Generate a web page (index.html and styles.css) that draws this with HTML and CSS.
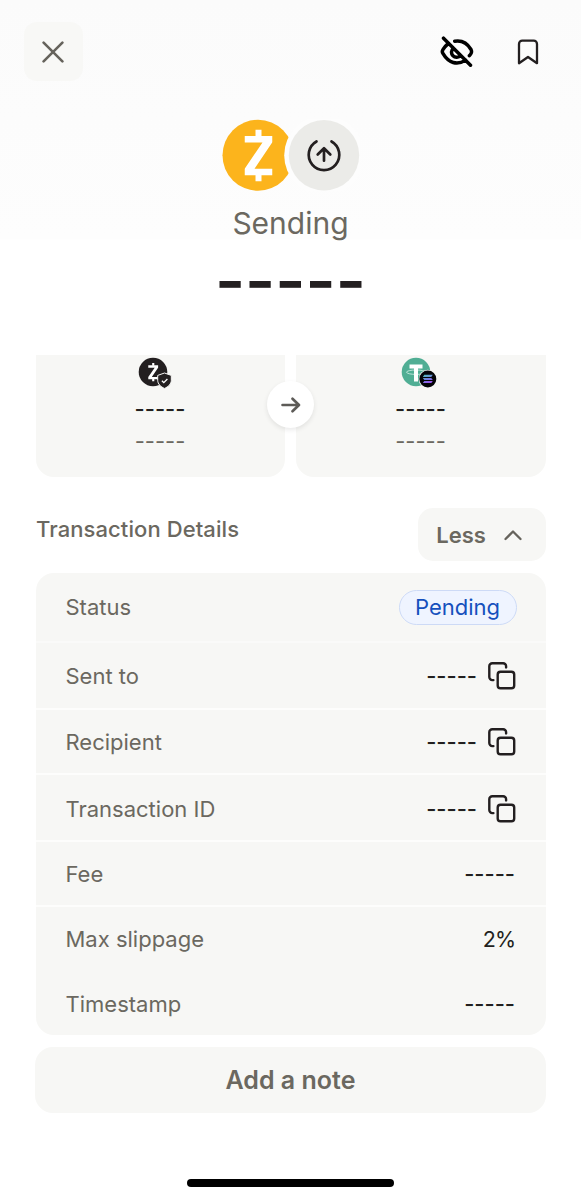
FILE: index.html
```html
<!DOCTYPE html>
<html lang="en">
<head>
<meta charset="utf-8">
<title>Transaction</title>
<link rel="stylesheet" href="styles.css">
</head>
<body>
<svg class="defs" aria-hidden="true">
  <symbol id="copy" viewBox="0 0 28 28"><g fill="none" stroke="#231f20" stroke-width="2.4" stroke-linecap="round"><rect x="9.700" y="9.700" width="16.500" height="16.500" rx="2.800"/><path d="M5.400 18.100H4.300a3 3 0 0 1-3-3V4.300a3 3 0 0 1 3-3h10.800a3 3 0 0 1 3 3v1.100"/></g></symbol>
  <symbol id="zec" viewBox="0 0 28 52"><path d="M14 0v8M14 44v8" fill="none" stroke="#fff" stroke-width="6"/><path d="M0 6.400h28v6.200L10 39.200h18v6.600H0v-6.200L18 13H0z" fill="#fff"/></symbol>
</svg>
<main class="screen">
  <header class="topbar">
    <button class="close" aria-label="Close"><svg width="22" height="22" viewBox="0 0 22 22"><path d="M1.600 1.600l18.800 18.800M20.400 1.600L1.600 20.400"/></svg></button>
    <div class="actions">
      <svg width="34" height="32" viewBox="0 0 34 32" fill="none" stroke="#000" stroke-width="3.500" stroke-linecap="round"><path d="M3.500 2.200l27 27M14.700 5.300c7.200-1.200 12.900 2.400 16.300 8.200.7 1.300.8 2.500 0 4-.4.700-1 1.500-1.600 2.200M7.300 8.500C5.300 10 3.900 12 2.900 13.700c-.8 1.200-.8 2.400 0 3.700 5.600 9.600 14.200 12.300 22.800 6.700M13.500 12.300a5 5 0 1 0 7 7"/></svg>
      <svg width="22" height="26" viewBox="0 0 22 26" fill="none" stroke="#231f20" stroke-width="2.300" stroke-linejoin="round"><path d="M2 24.200V5a3.300 3.300 0 0 1 3.300-3.300h11.400A3.300 3.300 0 0 1 20 5v19.200l-9-6.200z"/></svg>
    </div>
  </header>

  <section class="summary">
    <svg width="138" height="72" viewBox="0 0 138 72">
      <circle cx="36" cy="36.300" r="35.500" fill="#fcb41c"/>
      <circle cx="102" cy="36.300" r="39.800" fill="#fdfdfd"/>
      <circle cx="102" cy="36.300" r="35.200" fill="#ebebe8"/>
      <use href="#zec" x="22.500" y="10.500" width="28" height="52"/>
      <g fill="none" stroke="#231f20" stroke-width="2.700" stroke-linecap="round" stroke-linejoin="round"><path d="M94.500 22.500a15.300 15.300 0 1 0 15 0M102 41.700V30M95.700 35.500l6.300-6.300 6.300 6.300"/></g>
    </svg>
    <h1 class="title">Sending</h1>
    <div class="amount">-----</div>
  </section>

  <section class="swap">
    <div class="asset from">
      <svg width="34" height="32" viewBox="0 0 34 32"><circle cx="15" cy="15" r="14.300" fill="#231f20"/><use href="#zec" x="10" y="6" width="10.500" height="18.500"/><path d="M26.500 16l6.800 2.400v5c0 3.500-3.200 6.500-6.800 8-3.600-1.500-6.800-4.500-6.800-8v-5z" fill="#231f20" stroke="#f7f7f5" stroke-width="1"/><path d="M23.900 23.700l1.900 1.900 3.600-3.600" fill="none" stroke="#fff" stroke-width="1.300"/></svg>
      <span class="value">-----</span>
      <span class="sub">-----</span>
    </div>
    <div class="asset to">
      <svg width="36" height="32" viewBox="0 0 36 32"><defs><linearGradient id="sol" x1="0" y1="0" x2="0.500" y2="1"><stop offset="0" stop-color="#51c5b6"/><stop offset=".55" stop-color="#6d83dc"/><stop offset="1" stop-color="#9b56ee"/></linearGradient></defs><circle cx="15" cy="15" r="14.300" fill="#50ae94"/><ellipse cx="15" cy="15.200" rx="9.500" ry="2.200" fill="none" stroke="#d5f0e8" stroke-width=".8"/><path d="M8.500 9.500h13M15 9v15.500" stroke="#fff" stroke-width="4" fill="none"/><circle cx="26.800" cy="22" r="9.200" fill="#f7f7f5"/><circle cx="26.800" cy="22" r="8.500" fill="#050509"/><path d="M23.300 17.800h8.500l-1.500 2.100h-8.500zM21.800 20.900h8.500l1.500 2.100h-8.500zM23.300 24h8.500l-1.500 2.100h-8.500z" fill="url(#sol)"/></svg>
      <span class="value">-----</span>
      <span class="sub">-----</span>
    </div>
    <div class="arrow"><svg width="20" height="16" viewBox="0 0 20 16"><path d="M1.500 8h16M11.500 1.700L18 8l-6.500 6.300"/></svg></div>
  </section>

  <section class="details-head">
    <h2>Transaction Details</h2>
    <button class="less">Less<svg width="18" height="12" viewBox="0 0 18 12"><path d="M1.500 10L9 2.500l7.500 7.500"/></svg></button>
  </section>

  <section class="details">
    <div class="row status"><span>Status</span><span class="pill">Pending</span></div>
    <div class="row sent"><span>Sent to</span><span class="data">-----<svg width="28" height="28"><use href="#copy"/></svg></span></div>
    <div class="row"><span>Recipient</span><span class="data">-----<svg width="28" height="28"><use href="#copy"/></svg></span></div>
    <div class="row id"><span>Transaction ID</span><span class="data">-----<svg width="28" height="28"><use href="#copy"/></svg></span></div>
    <div class="row"><span>Fee</span><span class="data">-----</span></div>
    <div class="row plain"><span>Max slippage</span><span class="data percent">2%</span></div>
    <div class="row plain last"><span>Timestamp</span><span class="data">-----</span></div>
  </section>

  <button class="note">Add a note</button>
  <div class="home"></div>
</main>
</body>
</html>
```
FILE: styles.css
```css
* { box-sizing: border-box; }
body { margin: 0; background: #fff; font-family: Inter, "Liberation Sans", sans-serif; font-feature-settings: "calt" 0; color: #231f20; }
button { border: 0; margin: 0; padding: 0; font: inherit; color: #6b6860; }
h1, h2 { margin: 0; }
svg { display: block; flex: none; }
.defs { display: none; }
.screen { width: 581px; height: 1199px; display: flex; flex-direction: column; background: linear-gradient(#fbfbfb 0, #fdfdfd 239px, #fff 240px); overflow: hidden; }

.topbar { height: 82px; padding: 22px 42px 0 24px; display: flex; justify-content: space-between; align-items: flex-start; }
.close { width: 59px; height: 59px; padding-right: 1px; border-radius: 13px; background: #f8f8f6; display: flex; align-items: center; justify-content: center; }
.close path { fill: none; stroke: #66635c; stroke-width: 2.6; stroke-linecap: round; }
.actions { display: flex; align-items: center; gap: 43px; height: 59px; }

.summary { height: 273px; padding-top: 37px; display: flex; flex-direction: column; align-items: center; }
.title { margin-top: 12px; font-size: 30px; line-height: 40px; font-weight: 400; color: #6b6860; }
.amount { margin-top: 8px; height: 60px; font-size: 65px; line-height: 60px; font-weight: 600; }

.swap { position: relative; height: 122px; margin: 0 35px 0 36px; display: grid; grid-template-columns: 249px 250px; justify-content: space-between; }
.asset { background: #f7f7f5; border-radius: 0 0 18px 18px; padding-top: 2px; display: flex; flex-direction: column; align-items: center; }
.value, .sub { margin-right: 1px; font-size: 22px; line-height: 32px; }
.from svg { margin-left: -12px; }
.to svg { margin-right: 4px; }
.from svg, .to svg { width: auto; }
.value { margin-top: 4px; font-weight: 500; }
.sub { color: #6b6860; }
.arrow { position: absolute; left: 231px; top: 26px; width: 47px; height: 47px; border-radius: 50%; background: #fff; box-shadow: 0 2px 5px rgba(0,0,0,.09); display: flex; align-items: center; justify-content: center; }
.arrow path { fill: none; stroke: #5d5b57; stroke-width: 2.6; stroke-linecap: round; stroke-linejoin: round; }

.details-head { height: 96px; padding: 31px 35px 0 36px; display: flex; justify-content: space-between; }
.details-head h2 { margin-top: 6px; font-size: 22px; line-height: 30px; font-weight: 500; letter-spacing: .08px; color: #6b6860; }
.less { width: 128px; height: 53px; padding-right: 6px; border-radius: 15px; background: #f7f7f5; display: flex; align-items: center; justify-content: center; gap: 18px; font-size: 22px; font-weight: 600; }
.less path { fill: none; stroke: #66635c; stroke-width: 2.3; stroke-linecap: round; stroke-linejoin: round; }

.details { margin: 0 35px 0 36px; height: 462px; background: #f7f7f5; border-radius: 18px; overflow: hidden; }
.row { height: 65px; padding: 0 31px 0 29.5px; display: flex; align-items: center; justify-content: space-between; border-bottom: 2px solid #fdfdfc; font-size: 22px; color: #6b6860; }
.status { height: 70px; padding-right: 29px; border-color: #fafaf9; }
.sent, .id { height: 67px; }
.sent, .sent + .row, .id { padding-right: 30px; }
.id { padding-top: 2px; }
.plain { padding-bottom: 2px; border: 0; }
.last { height: 64px; padding-bottom: 0; }
.data { display: flex; align-items: center; gap: 11px; color: #231f20; font-weight: 450; }
.percent { font-size: 21.5px; font-weight: 400; letter-spacing: -1px; }
.pill { height: 35px; width: 118px; padding-right: 1px; border: 1.5px solid #cddaf6; border-radius: 18px; background: #eff4ff; color: #1550bd; display: flex; align-items: center; justify-content: center; }

.note { margin: 12px 35px 0 35px; height: 66px; border-radius: 18px; background: #f7f7f5; font-size: 25px; font-weight: 600; }
.home { margin: 66px auto 0; width: 207px; height: 8px; border-radius: 4px; background: #000; }
```
